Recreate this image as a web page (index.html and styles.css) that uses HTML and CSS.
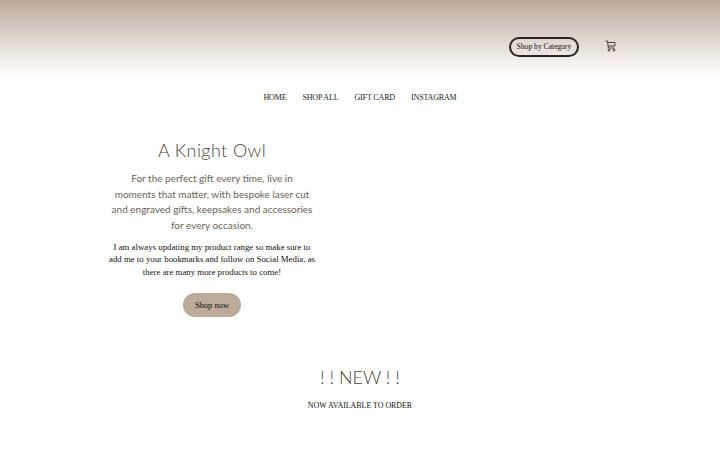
FILE: index.html
```html
<!DOCTYPE html>
<html lang="en">
<head>
    <meta charset="UTF-8">
    <meta name="viewport" content="width=device-width, initial-scale=1.0">
    <title>A Knight Owl</title>
    <link rel="stylesheet" href="styles.css">
</head>
<body>
    <header class="header">
        <a class="category-button" href="#">Shop by Category</a>
        <a class="cart" href="#" aria-label="Cart">
            <svg width="11" height="12" viewBox="0 0 11 12" fill="none" stroke="#4a4038" stroke-width="1">
                <path d="M.5 1h1.9l1 7h6"/>
                <path d="M2.6 2.5h7.4v3.5H3.1"/>
                <circle cx="4" cy="10" r="1"/>
                <circle cx="9" cy="10" r="1"/>
            </svg>
        </a>
    </header>

    <nav class="nav">
        <a href="#">HOME</a>
        <a href="#">SHOP ALL</a>
        <a href="#">GIFT CARD</a>
        <a href="#">INSTAGRAM</a>
    </nav>

    <section class="hero">
        <h1>A Knight Owl</h1>
        <p class="lead">For the perfect gift every time, live in moments that matter, with bespoke laser cut and engraved gifts, keepsakes and accessories for every occasion.</p>
        <p class="note">I am always updating my product range so make sure to add me to your bookmarks and follow on Social Media, as there are many more products to come!</p>
        <a class="shop-button" href="#">Shop now</a>
    </section>

    <section class="new">
        <h2>! ! NEW ! !</h2>
        <p>NOW AVAILABLE TO ORDER</p>
    </section>
</body>
</html>
```

FILE: styles.css
```css
body {
    margin: 0;
    font-family: "Liberation Serif", serif;
    background-color: #fff;
    color: #111;
    overflow: hidden;
}

a {
    color: inherit;
    text-decoration: none;
}

.header {
    height: 76px;
    display: flex;
    justify-content: flex-end;
    align-items: center;
    padding: 18px 104px 0 0;
    box-sizing: border-box;
    background: linear-gradient(#bcaa9b, #fff);
}

.category-button {
    width: 66px;
    height: 16px;
    line-height: 16px;
    text-align: center;
    font-size: 7.6px;
    border: 2px solid #2b2622;
    border-radius: 11px;
}

.cart {
    display: flex;
    margin-left: 26px;
    margin-top: -2px;
}

.nav {
    display: flex;
    justify-content: center;
    gap: 16px;
    padding-top: 16px;
    height: 14px;
    font-size: 8px;
    line-height: 11px;
    letter-spacing: -0.15px;
    color: #222;
}

.hero {
    width: 212px;
    margin: 32px 0 0 106px;
    text-align: center;
}

.hero h1 {
    margin: 0;
    font-family: Lato, sans-serif;
    font-size: 18px;
    line-height: 24px;
    font-weight: 300;
    letter-spacing: 0.4px;
    color: #4a4238;
}

.lead {
    width: 203px;
    margin: 9px auto 0;
    font-family: Lato, sans-serif;
    font-size: 10px;
    line-height: 15.7px;
    color: #6a5f53;
}

.note {
    width: 206px;
    margin: 7px auto 0;
    font-size: 8.8px;
    line-height: 12.4px;
}

.shop-button {
    display: block;
    width: 58px;
    height: 24px;
    margin: 15px auto 0;
    line-height: 24px;
    font-size: 8.5px;
    border-radius: 12px;
    background-color: #bcaa9b;
}

.new {
    margin-top: 48px;
    text-align: center;
}

.new h2 {
    margin: 0;
    font-family: Lato, sans-serif;
    font-size: 18px;
    line-height: 24px;
    font-weight: 300;
    color: #4a4238;
}

.new p {
    margin: 11px 0 0;
    font-size: 7.9px;
    line-height: 12px;
}
```
